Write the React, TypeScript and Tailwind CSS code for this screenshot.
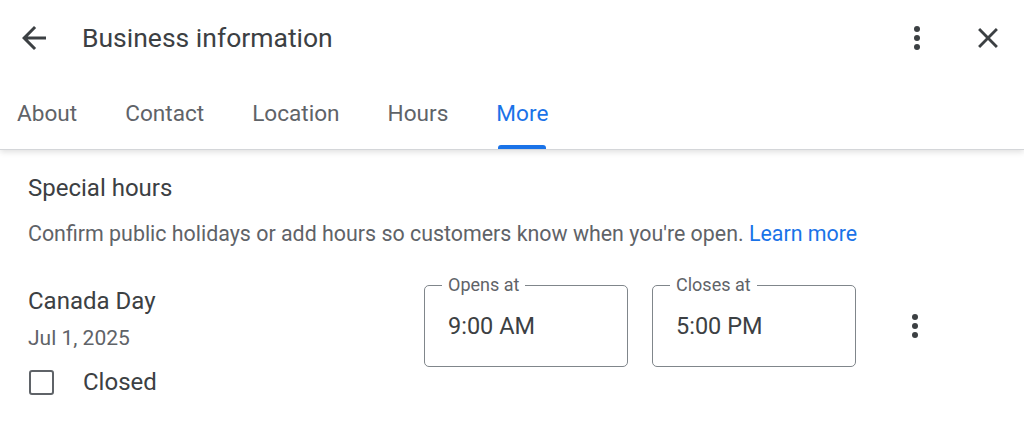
import React from 'react';

const tabs = ['About', 'Contact', 'Location', 'Hours', 'More'];

function Kebab({ gap = 9 }: { gap?: number }) {
  return (
    <svg width="8" height={gap * 2 + 8} viewBox={`0 0 8 ${gap * 2 + 8}`} className="block">
      <circle cx="4" cy="4" r="3" fill="#3c4043" />
      <circle cx="4" cy={4 + gap} r="3" fill="#3c4043" />
      <circle cx="4" cy={4 + gap * 2} r="3" fill="#3c4043" />
    </svg>
  );
}

function TimeField({ label, value }: { label: string; value: string }) {
  return (
    <div className="relative w-[204px] h-[82px] rounded-[5px] border border-[#80868b] flex items-center pl-[23px]">
      <span className="absolute left-[17px] top-[-13px] bg-white px-[6px] text-[18px] leading-[24px] text-[#5f6368]">
        {label}
      </span>
      <span className="text-[23.5px] leading-[30px] text-[#3c4043]">{value}</span>
    </div>
  );
}

export default function App() {
  return (
    <div className="w-[1024px] h-[431px] bg-white overflow-hidden font-['Roboto','Liberation_Sans',sans-serif]">
      {/* 상단 바 + 탭 */}
      <div className="relative z-10 bg-white border-b border-[#d4d6d9] shadow-[0_2px_6px_rgba(0,0,0,0.13)]">
        <div className="h-[75px] flex items-center pl-[16px] pr-[19px]">
          <svg width="36" height="36" viewBox="0 0 24 24" className="block">
            <path d="M20 11H7.83l5.59-5.59L12 4l-8 8 8 8 1.41-1.41L7.83 13H20v-2z" fill="#3c4043" />
          </svg>
          <h1 className="ml-[30px] text-[26.5px] leading-[34px] text-[#3c4043] font-normal">Business information</h1>
          <div className="ml-auto flex items-center">
            <Kebab />
            <svg width="34" height="34" viewBox="0 0 24 24" className="block ml-[50px]">
              <path
                d="M19 6.41L17.59 5 12 10.59 6.41 5 5 6.41 10.59 12 5 17.59 6.41 19 12 13.41 17.59 19 19 17.59 13.41 12z"
                fill="#3c4043"
              />
            </svg>
          </div>
        </div>
        <div className="h-[74px] flex items-end pl-[17px] gap-[48px]">
          {tabs.map((t) => {
            const active = t === 'More';
            return (
              <div key={t} className="flex flex-col items-center">
                <span
                  className={`text-[22.6px] leading-[28px] font-normal ${active ? 'text-[#1a73e8]' : 'text-[#5f6368]'}`}
                >
                  {t}
                </span>
                <div className={`mt-[17px] h-[4px] w-[calc(100%-4px)] rounded-t-[3px] ${active ? 'bg-[#1a73e8]' : 'bg-transparent'}`} />
              </div>
            );
          })}
        </div>
      </div>

      {/* 특별 영업시간 */}
      <div className="px-[28px] pt-[23px]">
        <h2 className="text-[24px] leading-[30px] text-[#3c4043]">Special hours</h2>
        <p className="mt-[17px] text-[21.4px] leading-[28px] text-[#5f6368] whitespace-nowrap">
          Confirm public holidays or add hours so customers know when you're open.{' '}
          <span className="text-[#1a73e8]">Learn more</span>
        </p>

        <div className="mt-[37px] flex items-start">
          <div className="w-[396px] pt-[1px]">
            <div className="text-[24px] leading-[30px] text-[#3c4043]">Canada Day</div>
            <div className="mt-[9px] text-[21px] leading-[26px] text-[#5f6368]">Jul 1, 2025</div>
            <div className="mt-[16px] flex items-center">
              <div className="ml-[1px] w-[25px] h-[25px] rounded-[3px] border-[2.5px] border-[#5f6368]" />
              <span className="ml-[29px] text-[24px] leading-[30px] text-[#3c4043]">Closed</span>
            </div>
          </div>
          <div className="flex items-center gap-[24px]">
            <TimeField label="Opens at" value="9:00 AM" />
            <TimeField label="Closes at" value="5:00 PM" />
            <div className="ml-[31px]">
              <Kebab gap={9} />
            </div>
          </div>
        </div>
      </div>
    </div>
  );
}
